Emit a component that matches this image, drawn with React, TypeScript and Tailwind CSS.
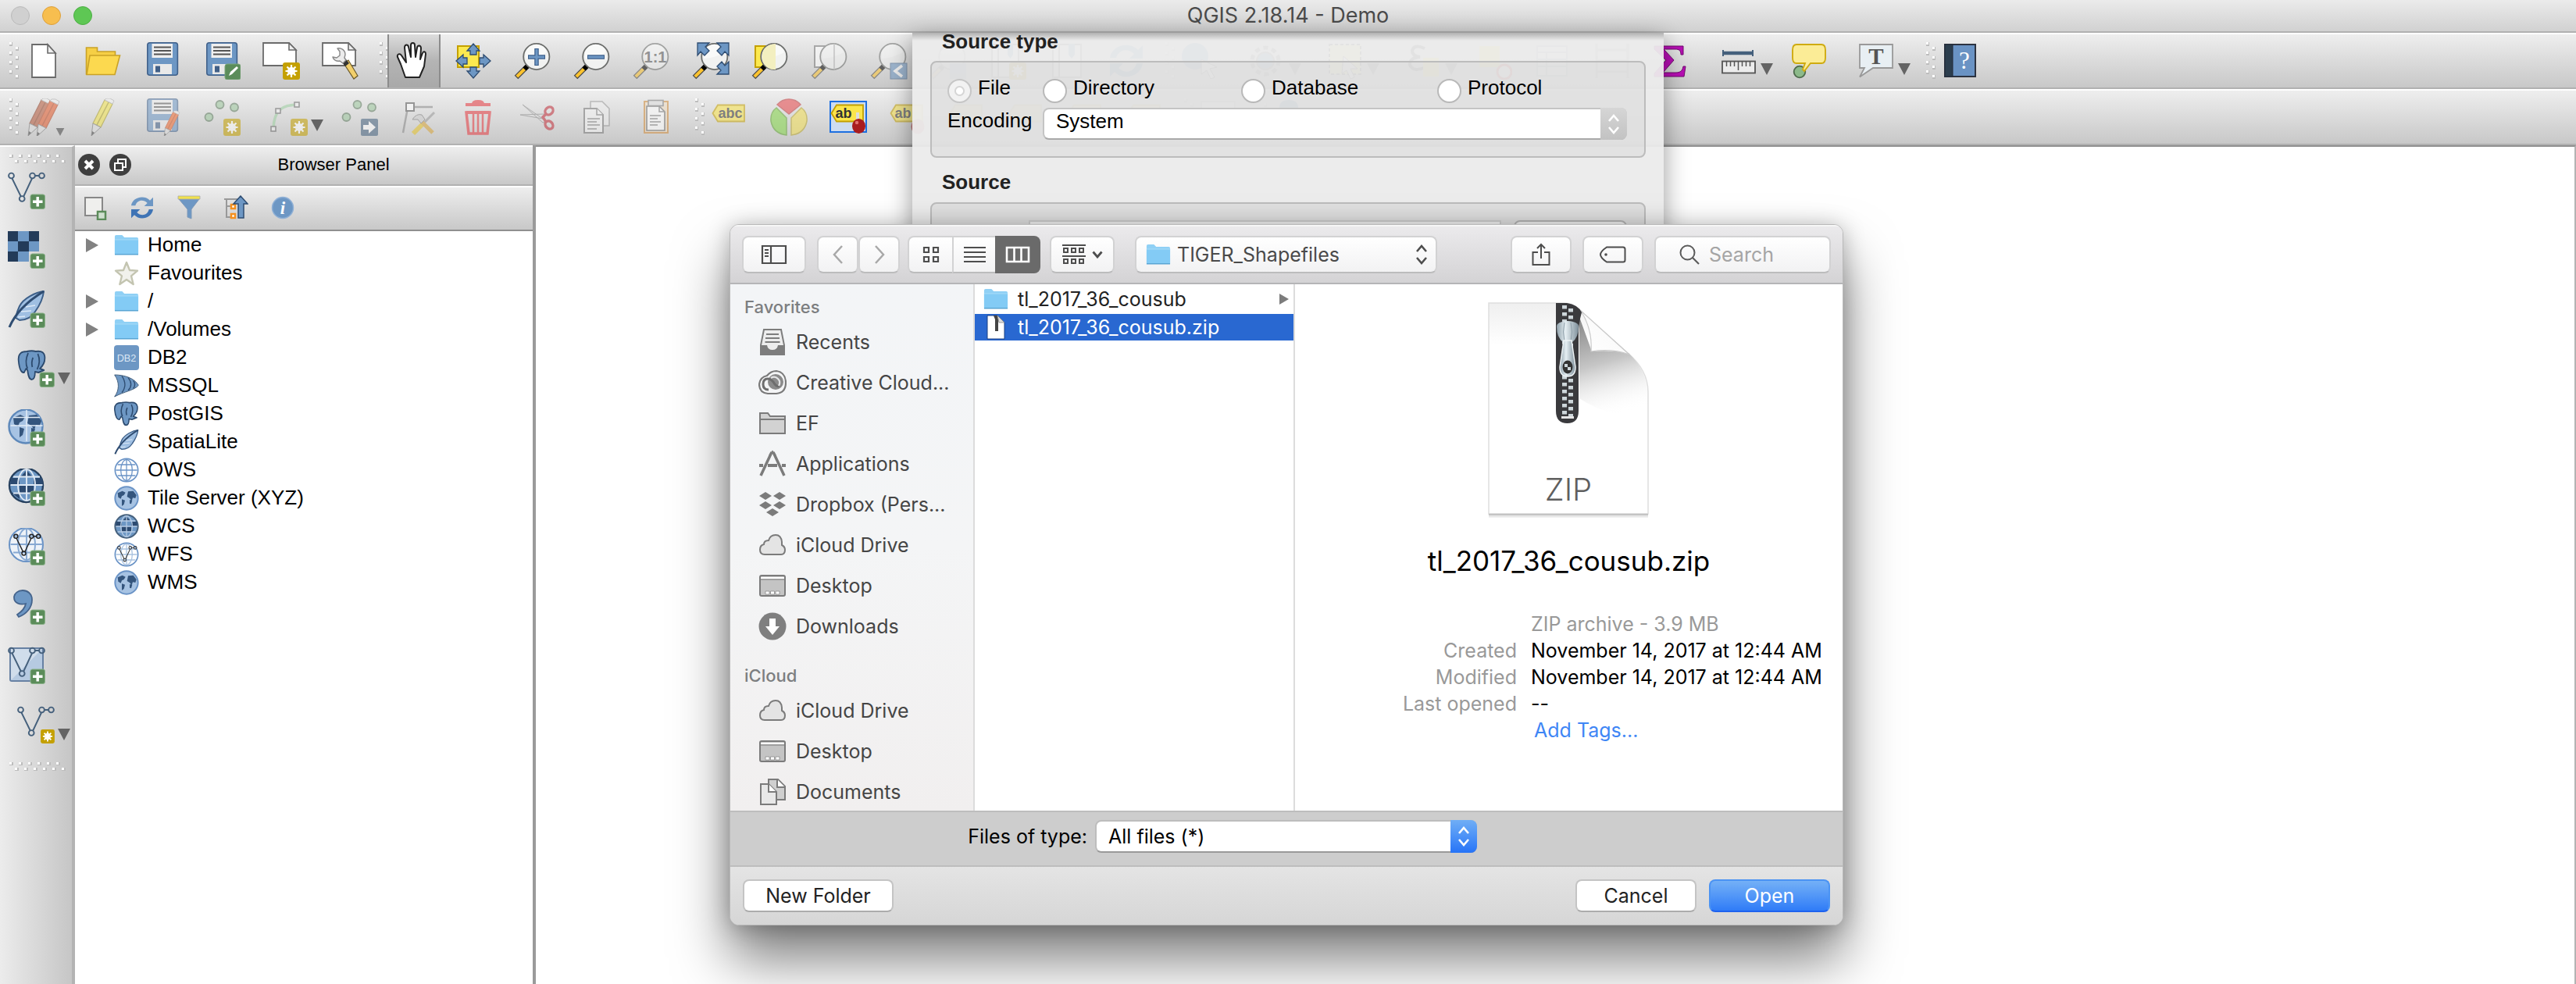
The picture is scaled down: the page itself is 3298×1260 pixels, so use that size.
import React from "react";

type Kids = { children?: React.ReactNode };

/* ---------- shared drawing parts ---------- */

function Art({ children, className = "size-12", box = "0 0 48 48" }: Kids & { className?: string; box?: string }) {
  return (
    <svg viewBox={box} className={`${className} block shrink-0`} aria-hidden="true">
      {children}
    </svg>
  );
}

const PlusBadge = () => (
  <g>
    <rect x="29" y="29" width="18.5" height="18.5" rx="2.5" fill="#5b8c5a" stroke="#8bb18a" />
    <path d="M38.2 32v12.5M32 38.2h12.5" stroke="#fff" strokeWidth="3.4" />
  </g>
);

const StarBadge = () => (
  <g>
    <rect x="26" y="26" width="22" height="22" rx="3" fill="#c4a000" />
    <path d="M37 29v16M29.5 37h15M31.5 31.5l11 11M42.5 31.5l-11 11" stroke="#fff" strokeWidth="2.2" />
    <circle cx="37" cy="37" r="4.2" fill="none" stroke="#fff" strokeWidth="1.8" />
  </g>
);

const Lens = ({ children }: Kids) => (
  <g>
    <path d="M3 45L18 30" stroke="#4a4a4a" strokeWidth="6.5" />
    <path d="M3.8 44.2L14 34" stroke="#fcc32f" strokeWidth="4" />
    <path d="M13.5 34.5L18.5 29.5" stroke="#000" strokeWidth="6" />
    <circle cx="28.8" cy="18.5" r="16.6" fill="#f1f2f1" stroke="#6b6d6b" strokeWidth="1.8" />
    <path d="M15 13a14 14 0 0 1 27 0q-12 7-27 8z" fill="#fff" opacity=".6" />
    {children}
  </g>
);

const Page = ({ x = 0, y = 0 }: { x?: number; y?: number }) => (
  <g transform={`translate(${x} ${y})`}>
    <path d="M1 1H34l9 9V30H1z" fill="#fff" stroke="#6b6b6b" strokeWidth="1.8" />
    <path d="M34 1v9h9z" fill="#eee" stroke="#6b6b6b" strokeWidth="1.6" />
  </g>
);

const Floppy = () => (
  <g>
    <rect x="4.8" y=".8" width="38.6" height="41.4" rx="3" fill="#6d97c4" stroke="#41618a" strokeWidth="1.6" />
    <rect x="10.500" y="2" width="26.5" height="18" fill="#efefef" />
    <path d="M13 6.500h22M13 11h22M13 15.500h22" stroke="#555" strokeWidth="1.8" />
    <path d="M12 28h24v13H12z" fill="#e9e9e9" />
    <path d="M15 30.500h6v8h-6z" fill="#415f87" />
  </g>
);

const Glyph = ({ x, y, size, fill, children, serif, bold }: Kids & { x: number; y: number; size: number; fill: string; serif?: boolean; bold?: boolean }) => (
  <text
    x={x}
    y={y}
    fontSize={size}
    fill={fill}
    textAnchor="middle"
    fontWeight={bold ? 700 : 400}
    fontFamily={serif ? '"Liberation Serif", serif' : '"Liberation Sans", sans-serif'}
  >
    {children}
  </text>
);

const Tag = ({ text }: { text?: string }) => (
  <g>
    <path d="M2.500 19L9 8.500H43V29.500H9z" fill="#fbe54b" stroke="#c4a000" strokeWidth="1.8" />
    {text && (
      <Glyph x={text === "abc" ? 25 : 18} y={25} size={18} fill="#333" bold>
        {text}
      </Glyph>
    )}
  </g>
);

const Vee = ({ color = "#45607c" }: { color?: string }) => (
  <g fill="none" stroke={color} strokeWidth="1.900">
    <path d="M5.500 8.500L17 32M20 32L31 8.500M35 5h5" />
    <circle cx="4.500" cy="5" r="3.400" />
    <circle cx="31.500" cy="5" r="3.400" />
    <circle cx="43.500" cy="5" r="3.400" />
    <circle cx="18.200" cy="34.500" r="3.400" />
  </g>
);

const GlobeGrid = ({ line = "#6a93c6" }: { line?: string }) => (
  <g fill="none" stroke={line} strokeWidth="1.900">
    <ellipse cx="24" cy="21" rx="11" ry="20" />
    <path d="M3.500 21h41M7 10.500h34M7 31.500h34M24 1v40" />
  </g>
);

const Land = () => (
  <g fill="#34557d">
    <path d="M7 11l9-4 6 3-3 5-4 2-2 5-5-3zM27 8l10-1 6 8-2 6-5-1-2 6-4-5-5-3zM15 23l6 2-2 8-4 3zM30 24l5 1-2 7-3-1z" />
  </g>
);

const Elephant = () => (
  <g stroke="#2c4a6e" strokeWidth="2" strokeLinejoin="round" transform="scale(.88 1)">
    <path d="M14 2c-8 0-13 3-12 12 1 10 4 16 8 15l3-5 2 2c1 6 2 12 6 12s5-4 5-10l5 1 8-3-6-2c6-5 8-10 7-16-1-5-6-7-13-6-4-1-8-1-13 0z" fill="#6d97c4" />
    <path d="M15 24c-3-6-2-14 1-20M30 5c3 6 3 13-1 20M22 22c-1-4-1-8 1-12" fill="none" />
  </g>
);

const Feather = () => (
  <g strokeLinejoin="round">
    <path d="M46 1C36 2 20 10 15 20c-3 6-4 11-5 15l5 3c8 0 15-3 20-11 5-7 10-16 11-26z" fill="#9fbfe2" stroke="#3d5f88" strokeWidth="2" />
    <path d="M46 1C28 12 10 28 2 47" fill="none" stroke="#2f4d72" strokeWidth="3" />
    <path d="M30 26l-13 1M35 19l-12 2M22 33l-9 1" stroke="#dce9f6" strokeWidth="1.600" />
  </g>
);

const Cyc = () => (
  <g>
    <path d="M3 20C5 4 28-2 39 10l6-6v17H28l6-6C26 7 14 9 11 20z" fill="#6d97c4" />
    <path d="M45 27C43 44 20 50 9 38l-6 6V27h17l-6 6c8 8 20 6 23-6z" fill="#3f74b5" />
  </g>
);

const PencilShape = ({ body, dark }: { body: string; dark: string }) => (
  <g>
    <path d="M26 2l10 5-15 30-10-5z" fill={body} stroke={dark} strokeWidth="1.200" />
    <path d="M31 5L16 34" stroke={dark} strokeWidth="1.500" />
    <path d="M26 2l10 5 2-4-5-3h-5z" fill="#eee" stroke="#aaa" />
    <path d="M11 32l10 5-12 11z" fill="#ddd" stroke="#777" />
    <path d="M10 42l3 2-4 4z" fill="#444" />
  </g>
);

const Dots = () => (
  <g fill="#9cc79d" stroke="#5d7a5e" strokeWidth="1.800">
    <circle cx="21.500" cy="8" r="5" />
    <circle cx="40" cy="11.500" r="5" />
    <circle cx="7.500" cy="24" r="5" />
  </g>
);

const Drop = ({ small }: { small?: boolean }) => (
  <svg viewBox="0 0 16 15" className={`${small ? "h-2.5 w-3.5" : "h-[15px] w-4"} block shrink-0`} aria-hidden="true">
    <path d="M0 0h16L8 15z" fill="#646464" />
  </svg>
);

/* ---------- tool bar icons ---------- */

const icons: Record<string, React.ReactNode> = {
  newFile: (
    <>
      <path d="M9 3h20l10 11v31H9z" fill="#fff" stroke="#6b6b6b" strokeWidth="1.800" />
      <path d="M29 3v11h10z" fill="#eee" stroke="#6b6b6b" strokeWidth="1.600" />
    </>
  ),
  open: (
    <>
      <path d="M2.500 7h14v5h23v5L36 41H2.500z" fill="#f6cf45" stroke="#c9a227" strokeWidth="1.600" />
      <path d="M7 17h38.500L39 41.500H3z" fill="#fcd94f" stroke="#c9a227" strokeWidth="1.600" />
    </>
  ),
  save: <Floppy />,
  saveAs: (
    <>
      <Floppy />
      <rect x="28" y="28" width="20" height="20" rx="3" fill="#5b8c5a" stroke="#7aa579" />
      <path d="M33 43l2-5 8-7 2 2-8 8z" fill="#fff" />
    </>
  ),
  layout: (
    <>
      <Page />
      <StarBadge />
    </>
  ),
  layoutManager: (
    <>
      <Page />
      <path d="M28 27l6-4 12 20-5 4z" fill="#f2cf6b" stroke="#6b5a2a" strokeWidth="1.200" />
      <path d="M26 26l5-4 4 5-5 4z" fill="#333" />
      <path
        d="M20 8c5-1 10 2 10 8l-1 4 2 3-4 4-4-3c-4 1-8-1-9-5l5 1 4-3 0-5z"
        fill="#ececec"
        stroke="#888"
        strokeWidth="1.400"
        strokeLinejoin="round"
      />
    </>
  ),
  hand: (
    <path
      d="M13 45L7 28 3 19c-1-4 3-5 5-2l6 9-2-19c0-4 4-5 5-1l3 13V4c0-4 5-4 5 0l1 15 2-12c1-4 5-3 5 1l-1 14 3-8c1-3 4-2 4 1l-2 16-6 14z"
      fill="#fff"
      stroke="#222"
      strokeWidth="2"
      strokeLinejoin="round"
    />
  ),
  pan: (
    <>
      <rect x="4" y="5" width="27" height="27" fill="#fce94f" stroke="#c4a000" strokeWidth="2" />
      <path
        d="M24 2l8 9h-4v5h-8v-5h-4zM24 46l8-9h-4v-5h-8v5h-4zM2 24l9-8v4h5v8h-5v4zM46 24l-9-8v4h-5v8h5v4z"
        fill="#6d97c4"
        stroke="#2f4d72"
        strokeWidth="1.300"
      />
    </>
  ),
  zoomIn: (
    <Lens>
      <path d="M29 8v22M18 19h22" stroke="#3c5f8a" strokeWidth="5.500" />
      <path d="M29 9v20M19 19h20" stroke="#6d97c4" strokeWidth="3" />
    </Lens>
  ),
  zoomOut: (
    <Lens>
      <path d="M18 19h22" stroke="#3c5f8a" strokeWidth="5.500" />
      <path d="M19 19h20" stroke="#6d97c4" strokeWidth="3" />
    </Lens>
  ),
  zoomNative: (
    <Lens>
      <Glyph x={29} y={26} size={20} fill="#555" bold>
        1:1
      </Glyph>
    </Lens>
  ),
  zoomFull: (
    <>
      <Lens />
      <path
        d="M7 1h15l-5 5 5 5-6 6-5-5-4 5zM47 1H32l5 5-5 5 6 6 4-5 5 5zM47 41H32l5-5-5-5 6-6 4 5 5-5z"
        fill="#6d97c4"
        stroke="#2f4d72"
        strokeWidth="1.300"
      />
    </>
  ),
  zoomSelection: (
    <>
      <rect x="5" y="5" width="26" height="27" fill="#fce94f" stroke="#c4a000" strokeWidth="2" />
      <Lens>
        <path d="M16 9q6-7 15-7v33q-9 1-15-7-5-9 0-19z" fill="#f3efc0" />
      </Lens>
    </>
  ),
  zoomLayer: (
    <>
      <rect x="5" y="5" width="26" height="27" fill="#fff" stroke="#777" strokeWidth="2" />
      <Lens>
        <path d="M30 2v33" stroke="#aaa" strokeWidth="1.500" />
      </Lens>
    </>
  ),
  zoomLast: (
    <>
      <Lens />
      <rect x="26" y="27" width="21" height="20" fill="#6d97c4" stroke="#41618a" />
      <path d="M41 30l-9 7 9 7" stroke="#fff" strokeWidth="3.500" fill="none" />
    </>
  ),
  zoomNext: (
    <>
      <Lens />
      <rect x="26" y="27" width="21" height="20" fill="#6d97c4" />
    </>
  ),
  bookmarkNew: (
    <>
      <path d="M4 3h34v42H4zM12 3v42" fill="#fff" stroke="#777" strokeWidth="2" />
      <path d="M24 2h7v14l-3.500 5-3.500-5z" fill="#6d97c4" />
      <StarBadge />
    </>
  ),
  bookmark: (
    <>
      <path d="M6 3h36v42H6zM14 3v42" fill="#fff" stroke="#777" strokeWidth="2" />
      <path d="M26 2h8v14l-4 5-4-5z" fill="#6d97c4" />
    </>
  ),
  refresh: <Cyc />,
  identify: (
    <>
      <circle cx="18" cy="18" r="17" fill="#6d97c4" />
      <path d="M26 22l20 10-9 2 6 11-5 2-5-11-7 5z" fill="#fff" stroke="#555" />
    </>
  ),
  gear: (
    <>
      <circle cx="22" cy="24" r="17" fill="none" stroke="#777" strokeWidth="5" strokeDasharray="6 5" />
      <circle cx="22" cy="24" r="11" fill="#6d97c4" stroke="#777" strokeWidth="2" />
    </>
  ),
  selectRect: (
    <>
      <rect x="4" y="3" width="40" height="38" fill="#fbf3a0" stroke="#555" strokeWidth="2" strokeDasharray="4 3" />
      <path d="M22 18l18 16h-9l5 11-5 2-5-11-6 4z" fill="#fff" stroke="#555" />
    </>
  ),
  expression: (
    <>
      <path d="M26 8q-14-6-16 3 0 7 10 8-14 1-13 10 4 10 20 3" fill="none" stroke="#444" strokeWidth="4" />
      <rect x="24" y="20" width="20" height="24" fill="#fce94f" />
    </>
  ),
  deselect: (
    <>
      <rect x="6" y="5" width="26" height="27" fill="#fce94f" />
      <circle cx="38" cy="38" r="9" fill="#fff" stroke="#d33" strokeWidth="3" />
    </>
  ),
  table: <path d="M4 5h38v38H4zM4 13h38M4 22h38M4 31h38M16 13v30" fill="#fff" stroke="#789" strokeWidth="2" />,
  abacus: <path d="M4 2v44M44 2v44M4 10h40M4 24h40M4 38h40" fill="none" stroke="#777" strokeWidth="3" />,
  sigma: (
    <path
      d="M2 5h37v11h-3c0-5-2-7-7-7H14l13 14-14 16h16c6 0 9-2 10-8h3l-2 13H2v-4l15-17L2 9z"
      fill="#b80fb5"
      stroke="#6e0a6c"
    />
  ),
  measure: (
    <>
      <path d="M4 14h38M4 10v8M42 10v8" stroke="#45607c" strokeWidth="2" />
      <path d="M4 14h38" stroke="#45607c" strokeWidth="4.500" />
      <rect x="3" y="24.500" width="42" height="15" fill="#ececec" stroke="#555" strokeWidth="1.800" />
      <path d="M8.500 25v6M13.500 25v6M18.500 25v6M23.500 25v11M28.500 25v6M33.500 25v6M38.500 25v6" stroke="#555" strokeWidth="1.500" />
    </>
  ),
  tips: (
    <>
      <circle cx="12" cy="38" r="7.300" fill="#8cba8a" stroke="#4e6b4d" strokeWidth="1.800" />
      <path d="M8 3h32q5 0 5 7v10q0 7-5 7H26l-8 10-2-2 3-8H8q-5 0-5-7V10q0-7 5-7z" fill="#fbec96" stroke="#cfab10" strokeWidth="1.900" />
    </>
  ),
  textAnno: (
    <>
      <path d="M3 3h42v30H20L3 44.500l6-11.500H3z" fill="#e8eff3" stroke="#999" strokeWidth="1.800" />
      <Glyph x={24} y={28} size={29} fill="#555" serif bold>
        T
      </Glyph>
    </>
  ),
  help: (
    <>
      <rect x="4" y="3" width="39" height="41" fill="#6a93c4" stroke="#2c3341" strokeWidth="2" />
      <path d="M4 3h10v41H4z" fill="#2c3e4e" stroke="#222b38" />
      <Glyph x={29} y={34} size={31} fill="#fff" serif>
        ?
      </Glyph>
    </>
  ),
  edits: (
    <>
      <g transform="translate(-5 0)">
        <PencilShape body="#b5583a" dark="#8d3d22" />
      </g>
      <g transform="translate(6 1)">
        <PencilShape body="#e2592a" dark="#b5401b" />
      </g>
    </>
  ),
  pencil: <PencilShape body="#f2e34d" dark="#a89c20" />,
  saveEdits: (
    <>
      <Floppy />
      <g transform="translate(20 16) scale(.68)">
        <PencilShape body="#f06a2f" dark="#c4481a" />
      </g>
    </>
  ),
  addFeature: (
    <>
      <Dots />
      <StarBadge />
    </>
  ),
  moveFeature: (
    <>
      <Dots />
      <rect x="26" y="26" width="22" height="22" rx="2" fill="#45627f" />
      <path d="M29 34h7v-5l9 8-9 8v-5h-7z" fill="#fff" />
    </>
  ),
  curve: (
    <>
      <path d="M4 38C5 16 14 8 36 8" fill="none" stroke="#9ccfa0" strokeWidth="3.500" />
      <g fill="#eee" stroke="#666" strokeWidth="1.600">
        <rect x="1" y="36" width="6" height="6" />
        <rect x="7" y="13" width="6" height="6" />
        <rect x="31" y="5" width="6" height="6" />
      </g>
      <StarBadge />
    </>
  ),
  node: (
    <>
      <path d="M10 12L4 44M18 11h24" stroke="#888" strokeWidth="2.500" fill="none" />
      <rect x="8" y="6" width="10" height="10" fill="#fff" stroke="#555" strokeWidth="2" />
      <path d="M30 32l14-14" stroke="#999" strokeWidth="3" />
      <path d="M17 45l13-13" stroke="#e5c228" strokeWidth="6" />
      <path d="M28 30l14 14" stroke="#d7a438" strokeWidth="5" />
      <path d="M16 27q5-8 12-6l4 6-5 5-4-5z" fill="#ccc" stroke="#777" />
    </>
  ),
  trash: (
    <g fill="none" stroke="#e5393f">
      <path d="M8 8h32M18 7q0-3 6-3t6 3" strokeWidth="4" />
      <path d="M9 18h30l-3 27H12z" strokeWidth="3.500" />
      <path d="M9 18h30" strokeWidth="4" />
      <path d="M18 20v24M24 20v24M30 20v24" strokeWidth="2.500" />
    </g>
  ),
  cut: (
    <>
      <path d="M5 8l30 21-4 2zM2 21l31-1-2 6z" fill="#ddd" stroke="#888" />
      <g fill="none" stroke="#c12f3a" strokeWidth="3.400">
        <ellipse cx="39" cy="16" rx="5.500" ry="4.500" transform="rotate(-40 39 16)" />
        <ellipse cx="39" cy="34" rx="5.500" ry="4.500" transform="rotate(50 39 34)" />
        <path d="M35 20l-4 4 4 6" />
      </g>
    </>
  ),
  copy: (
    <g fill="#f4f4f4" stroke="#777" strokeWidth="1.500">
      <path d="M16 4h15l9 9v22H16z" opacity=".7" />
      <path d="M8 13h16l8 8v23H8z" strokeWidth="2" />
      <path d="M24 13v8h8M12 26h16M12 30h12M12 34h16M12 39h12" />
    </g>
  ),
  paste: (
    <g>
      <rect x="9" y="4" width="30" height="40" fill="#f0dcc0" stroke="#cf8b3a" strokeWidth="2" />
      <path d="M12 10h16l7 7v24H12z" fill="#fff" stroke="#666" strokeWidth="1.600" />
      <path d="M28 10v7h7M16 22h14M16 26h10M16 30h14M16 34h10" fill="none" stroke="#777" strokeWidth="1.500" />
      <rect x="14" y="2.500" width="19" height="7" fill="#ddd" stroke="#777" strokeWidth="1.600" />
    </g>
  ),
  label: <Tag text="abc" />,
  blankLabel: <Tag />,
  pie: (
    <g strokeWidth="1.500">
      <path d="M24 20L9 8q6-7 15-7t15 7z" fill="#e8474b" stroke="#c2383c" />
      <path d="M21 47V25L8 12Q0 18 1 29q3 16 20 18z" fill="#85d749" stroke="#5fa52e" />
      <path d="M27 47V25l13-13q8 6 7 17-3 16-20 18z" fill="#f3df55" stroke="#b9a62a" />
    </g>
  ),
  pinSelected: (
    <>
      <rect x="1" y="4" width="46" height="39" fill="#cddcf0" stroke="#1d6fe0" strokeWidth="2" />
      <Tag text="ab" />
      <path d="M36 18v12" stroke="#ddd" strokeWidth="4" />
      <ellipse cx="37.500" cy="35.500" rx="8.500" ry="9.500" fill="#a91c1f" />
      <circle cx="35" cy="31" r="2.200" fill="#e06f70" />
    </>
  ),
  pin: (
    <>
      <Tag text="ab" />
      <ellipse cx="37" cy="36" rx="8.500" ry="9.500" fill="#a91c1f" />
    </>
  ),
  metasearch: <rect x="2" y="4" width="43" height="40" fill="#fff" stroke="#bbb" strokeWidth="2" />,
  python: (
    <>
      <path d="M8 22V12q0-10 12-10t12 10v12H16q-6 0-6 10-6-2-2-12z" fill="#3f74b5" />
      <path d="M40 26V36q0 10-12 10T16 36V26h16q6 0 6-10 6 2 2 10z" fill="#f6cf45" />
    </>
  ),
  vector: (
    <>
      <Vee />
      <PlusBadge />
    </>
  ),
  raster: (
    <>
      <path d="M0 0h40v26H27v13H0z" fill="#6d97c4" />
      <path d="M0 0h13v13H0zM27 0h13v13H27zM13 13h14v13H13zM0 26h13v13H0z" fill="#233b59" />
      <PlusBadge />
    </>
  ),
  feather: (
    <>
      <Feather />
      <PlusBadge />
    </>
  ),
  postgis: (
    <>
      <Elephant />
      <PlusBadge />
    </>
  ),
  wms: (
    <>
      <circle cx="23" cy="22" r="21.500" fill="#a7c3e3" stroke="#5d88ba" strokeWidth="2.400" />
      <Land />
      <path d="M3.500 21h41M24 1v40M7 10.500h34" stroke="#e3edf7" strokeWidth="1.500" />
      <PlusBadge />
    </>
  ),
  wcs: (
    <>
      <circle cx="23.500" cy="21.500" r="21.500" fill="#6d97c4" stroke="#27415f" strokeWidth="2.400" />
      <path d="M4 12h11v9H3zM33 12h11l1 9H33zM15 21h18v10H15zM17 10l7-8 7 8zM5 31h10v8z" fill="#2c4a70" />
      <GlobeGrid line="#dfe9f4" />
      <PlusBadge />
    </>
  ),
  wfs: (
    <>
      <circle cx="23.500" cy="21.500" r="21.500" fill="#edf2f8" stroke="#6a93c6" strokeWidth="2" />
      <GlobeGrid line="#86a8d2" />
      <g transform="translate(7 7) scale(.74)">
        <Vee color="#222" />
      </g>
      <PlusBadge />
    </>
  ),
  comma: (
    <>
      <path d="M19 4c6 0 12 4 12 12 0 10-7 18-17 22l-2-3c6-4 10-8 11-14-8 2-15-1-15-8 0-5 5-9 11-9z" fill="#6d97c4" stroke="#45648c" strokeWidth="1.800" />
      <PlusBadge />
    </>
  ),
  virtual: (
    <>
      <rect x="3" y="2" width="42" height="42" rx="2" fill="#b6cae1" stroke="#6781a3" strokeWidth="2" />
      <path d="M4 3h40L4 43z" fill="#dce5ef" opacity=".7" />
      <Vee />
      <PlusBadge />
    </>
  ),
  newVector: (
    <>
      <Vee />
      <g transform="translate(9 9) scale(.81)">
        <StarBadge />
      </g>
    </>
  ),
};

/* ---------- tool bars ---------- */

function Grip() {
  return (
    <svg viewBox="0 0 14 48" className="ml-3 mr-[-8px] h-12 w-3.5 shrink-0" aria-hidden="true">
      {[0, 1, 2, 3].map((i) => (
        <g key={i}>
          <path d={`M0 ${i * 12}h4v5h-4zM8 ${i * 12 + 6}h4v5h-4z`} fill="#bdbdbd" />
          <path d={`M0 ${i * 12}h3v3h-3zM8 ${i * 12 + 6}h3v3h-3z`} fill="#fff" />
        </g>
      ))}
    </svg>
  );
}

function SideGrip() {
  return (
    <svg viewBox="0 0 72 12" className="ml-3 mb-[-4px] mt-2.5 h-3 w-[72px] shrink-0" aria-hidden="true">
      {[0, 1, 2, 3, 4, 5].map((i) => (
        <g key={i}>
          <path d={`M${i * 12} 0h5v4h-5zM${i * 12 + 7} 7h5v4h-5z`} fill="#bdbdbd" />
          <path d={`M${i * 12} 0h3v3h-3zM${i * 12 + 7} 7h3v3h-3z`} fill="#fff" />
        </g>
      ))}
    </svg>
  );
}

type Tool = { id: string; name: string; menu?: boolean; faded?: boolean; pressed?: boolean; corner?: boolean } | "grip";

function ToolButton({ tool }: { tool: Exclude<Tool, "grip"> }) {
  return (
    <button
      type="button"
      aria-label={tool.name}
      aria-pressed={tool.pressed}
      className={`relative flex h-full shrink-0 items-center ${tool.menu ? "w-[100px] pl-6" : "w-[76px] justify-center"}`}
    >
      {tool.pressed && <span className="absolute inset-x-1 inset-y-0 border-x-2 border-[#8c8c8c] bg-linear-to-b from-[#dcdcdc] via-[#b4b4b4] to-[#a9a9a9]" />}
      <span className={`relative ${tool.faded ? "opacity-55" : ""}`}>
        <Art>{icons[tool.id]}</Art>
      </span>
      {tool.menu && (
        <span className="ml-1 mt-5">
          <Drop />
        </span>
      )}
      {tool.corner && (
        <span className="absolute bottom-2.5 left-[52px] opacity-70">
          <Drop small />
        </span>
      )}
    </button>
  );
}

const mainTools: Tool[] = [
  "grip",
  { id: "newFile", name: "New project" },
  { id: "open", name: "Open project" },
  { id: "save", name: "Save project" },
  { id: "saveAs", name: "Save project as" },
  { id: "layout", name: "New print composer" },
  { id: "layoutManager", name: "Composer manager" },
  "grip",
  { id: "hand", name: "Pan map", pressed: true },
  { id: "pan", name: "Pan to selection" },
  { id: "zoomIn", name: "Zoom in" },
  { id: "zoomOut", name: "Zoom out" },
  { id: "zoomNative", name: "Zoom to native resolution", faded: true },
  { id: "zoomFull", name: "Zoom full" },
  { id: "zoomSelection", name: "Zoom to selection" },
  { id: "zoomLayer", name: "Zoom to layer", faded: true },
  { id: "zoomLast", name: "Zoom last", faded: true },
  { id: "zoomNext", name: "Zoom next", faded: true },
  { id: "bookmarkNew", name: "New bookmark" },
  { id: "bookmark", name: "Show bookmarks" },
  { id: "refresh", name: "Refresh map" },
  "grip",
  { id: "identify", name: "Identify features" },
  { id: "gear", name: "Run feature action", menu: true },
  { id: "selectRect", name: "Select features", menu: true },
  { id: "expression", name: "Select by expression", menu: true },
  { id: "deselect", name: "Deselect all" },
  { id: "table", name: "Open attribute table", faded: true },
  { id: "abacus", name: "Field calculator", faded: true },
  { id: "sigma", name: "Statistical summary" },
  { id: "measure", name: "Measure line", menu: true },
  { id: "tips", name: "Map tips" },
  { id: "textAnno", name: "Text annotation", menu: true },
  "grip",
  { id: "help", name: "Help contents" },
];

const editTools: Tool[] = [
  "grip",
  { id: "edits", name: "Current edits", faded: true, corner: true },
  { id: "pencil", name: "Toggle editing", faded: true },
  { id: "saveEdits", name: "Save layer edits", faded: true },
  { id: "addFeature", name: "Add feature", faded: true },
  { id: "curve", name: "Add circular string", faded: true, menu: true },
  { id: "moveFeature", name: "Move feature", faded: true },
  { id: "node", name: "Node tool", faded: true },
  { id: "trash", name: "Delete selected", faded: true },
  { id: "cut", name: "Cut features", faded: true },
  { id: "copy", name: "Copy features", faded: true },
  { id: "paste", name: "Paste features", faded: true },
  "grip",
  { id: "label", name: "Layer labeling options", faded: true },
  { id: "pie", name: "Layer diagram options", faded: true },
  { id: "pinSelected", name: "Highlight pinned labels" },
  { id: "pin", name: "Pin labels", faded: true },
  { id: "blankLabel", name: "Show labels", faded: true },
  { id: "blankLabel", name: "Move label", faded: true },
  { id: "blankLabel", name: "Rotate label", faded: true },
  { id: "blankLabel", name: "Change label", faded: true },
  "grip",
  { id: "metasearch", name: "MetaSearch" },
  "grip",
  { id: "python", name: "Python console" },
];

function ToolBar({ tools, label }: { tools: Tool[]; label: string }) {
  return (
    <div role="toolbar" aria-label={label} className="flex h-[72px] shrink-0 items-center overflow-hidden border-y-2 border-t-white border-b-[#b1b1b1] bg-linear-to-b from-[#eeeeee] to-[#c8c8c8]">
      {tools.map((t, i) => (t === "grip" ? <Grip key={i} /> : <ToolButton key={i} tool={t} />))}
    </div>
  );
}

const layerTools: { id: string; name: string; menu?: boolean }[] = [
  { id: "vector", name: "Add vector layer" },
  { id: "raster", name: "Add raster layer" },
  { id: "feather", name: "Add SpatiaLite layer" },
  { id: "postgis", name: "Add PostGIS layer", menu: true },
  { id: "wms", name: "Add WMS layer" },
  { id: "wcs", name: "Add WCS layer" },
  { id: "wfs", name: "Add WFS layer" },
  { id: "comma", name: "Add delimited text layer" },
  { id: "virtual", name: "Add virtual layer" },
  { id: "newVector", name: "New layer", menu: true },
];

function LayerBar() {
  return (
    <div role="toolbar" aria-label="Manage layers" className="flex w-24 shrink-0 flex-col border-r-4 border-[#b3b3b3] border-t-2 border-t-white bg-linear-to-r from-[#ececec] to-[#c6c6c6]">
      <SideGrip />
      {layerTools.map((t) => (
        <button key={t.id} type="button" aria-label={t.name} className={`flex h-[76px] shrink-0 items-center ${t.menu ? "pl-[22px]" : "pl-2.5"}`}>
          <Art>{icons[t.id]}</Art>
          {t.menu && (
            <span className="ml-1 mt-6">
              <Drop />
            </span>
          )}
        </button>
      ))}
      <SideGrip />
    </div>
  );
}

/* ---------- browser panel ---------- */

const BlueFolder = ({ className = "h-7 w-8" }: { className?: string }) => (
  <svg viewBox="0 0 34 28" className={`${className} block shrink-0`} preserveAspectRatio="none" aria-hidden="true">
    <path d="M1 3q0-2 2-2h8l3 3h17q2 0 2 2v19H1z" fill="#8fd0f5" />
    <path d="M1 7h32v18q0 1-1 1H2q-1 0-1-1z" fill="#83cbf5" />
    <path d="M1 25h32v1.500H1z" fill="#5aa6d4" />
    <path d="M1 7h32" stroke="#a9dcf8" />
  </svg>
);

const treeIcons: Record<string, React.ReactNode> = {
  star: (
    <path d="M24 3l6 15 15 1-12 10 4 16-13-9-13 9 4-16L3 19l15-1z" fill="#f1f1ec" stroke="#c3c4b0" strokeWidth="3.500" strokeLinejoin="round" />
  ),
  db2: (
    <>
      <rect width="48" height="48" rx="6" fill="#6d97c4" />
      <Glyph x={24} y={31} size={19} fill="#dbe7f4">
        DB2
      </Glyph>
    </>
  ),
  mssql: (
    <>
      <path d="M1 3c18 0 38 6 46 20-8 10-28 12-46 22 9-12 10-28 0-42z" fill="#6d97c4" stroke="#45607c" strokeWidth="1.500" />
      <path d="M15 5c8 12 8 22 0 32M27 8c7 9 7 18 0 25M37 14c4 5 4 10 0 15" fill="none" stroke="#2f4d72" strokeWidth="2" />
    </>
  ),
  postgis: (
    <g transform="translate(-1 0) scale(1.3 1.2)">
      <Elephant />
    </g>
  ),
  spatialite: <Feather />,
  ows: (
    <g transform="translate(0 3)">
      <circle cx="24" cy="21" r="22" fill="#fff" stroke="#6a93c6" strokeWidth="2.500" />
      <GlobeGrid />
    </g>
  ),
  xyz: (
    <g transform="translate(0 3)">
      <circle cx="24" cy="21" r="22" fill="#a7c3e3" stroke="#6a93c6" strokeWidth="3" />
      <Land />
    </g>
  ),
  wcs: (
    <g transform="translate(0 3)">
      <circle cx="24" cy="21" r="22" fill="#6d97c4" stroke="#45607c" strokeWidth="3" />
      <path d="M4 12h11v9H3zM33 12h11l1 9H33zM15 21h18v10H15zM17 10l7-8 7 8z" fill="#2c4a70" />
      <GlobeGrid line="#b6cbe3" />
    </g>
  ),
  wfs: (
    <g transform="translate(0 3)">
      <circle cx="24" cy="21" r="22" fill="#fff" stroke="#6a93c6" strokeWidth="2.500" />
      <GlobeGrid line="#a9c2e0" />
      <g transform="translate(6 4) scale(.8)">
        <Vee color="#333" />
      </g>
    </g>
  ),
};

const tree: { label: string; icon: string; open?: boolean }[] = [
  { label: "Home", icon: "folder", open: true },
  { label: "Favourites", icon: "star" },
  { label: "/", icon: "folder", open: true },
  { label: "/Volumes", icon: "folder", open: true },
  { label: "DB2", icon: "db2" },
  { label: "MSSQL", icon: "mssql" },
  { label: "PostGIS", icon: "postgis" },
  { label: "SpatiaLite", icon: "spatialite" },
  { label: "OWS", icon: "ows" },
  { label: "Tile Server (XYZ)", icon: "xyz" },
  { label: "WCS", icon: "wcs" },
  { label: "WFS", icon: "wfs" },
  { label: "WMS", icon: "xyz" },
];

function BrowserPanel() {
  return (
    <section aria-label="Browser Panel" className="flex w-[590px] shrink-0 flex-col border-r-4 border-[#9a9a9a]">
      <header className="relative flex h-[52px] shrink-0 items-center gap-3 border-y-2 border-t-white border-b-[#b1b1b1] bg-linear-to-b from-[#eeeeee] to-[#c8c8c8] px-1 pb-0.5">
        <button type="button" aria-label="Close panel">
          <Art box="0 0 28 28" className="size-7">
            <circle cx="14" cy="14" r="14" fill="#3f3f3f" />
            <path d="M9 9l10 10M19 9L9 19" stroke="#fff" strokeWidth="4" />
          </Art>
        </button>
        <button type="button" aria-label="Float panel">
          <Art box="0 0 28 28" className="size-7">
            <circle cx="14" cy="14" r="14" fill="#3f3f3f" />
            <path d="M11 11V7h10v10h-3M7 12h10v9H7z" fill="none" stroke="#fff" strokeWidth="2" />
          </Art>
        </button>
        <h2 className="flex-1 pr-1 text-center text-[22px] leading-7 text-black">Browser Panel</h2>
      </header>
      <div role="toolbar" aria-label="Browser" className="flex h-[58px] shrink-0 items-center gap-7 border-y-2 border-t-white border-b-[#8f8f8f] bg-linear-to-b from-[#eeeeee] to-[#c8c8c8] px-2.5 pb-0.5">
        <button type="button" aria-label="Add layer">
          <Art box="0 0 32 32" className="size-8">
            <path d="M3 3h22v23H3z" fill="#efefed" stroke="#888" strokeWidth="2" />
            <rect x="19" y="21" width="10" height="10" fill="#cfe0cf" stroke="#5b8c5a" strokeWidth="2.500" />
          </Art>
        </button>
        <button type="button" aria-label="Refresh">
          <Art className="size-8">
            <Cyc />
          </Art>
        </button>
        <button type="button" aria-label="Filter browser">
          <Art box="0 0 32 32" className="size-8">
            <path d="M3 5h26L19 18v12l-5-2V18z" fill="#6d97c4" stroke="#7f99b8" />
            <path d="M2 1h28v4H2z" fill="#f0e14c" stroke="#aaa" strokeWidth=".8" />
          </Art>
        </button>
        <button type="button" aria-label="Collapse all">
          <Art box="0 0 32 32" className="size-8">
            <path d="M1 5h22M4 5v23h6M4 14h6" stroke="#999" strokeWidth="2" fill="none" />
            <path d="M10 12h5v5h-5zM10 24h5v5h-5z" fill="#fff" stroke="#f5901e" strokeWidth="2.500" />
            <path d="M22 1l9 10h-5v18h-7V11h-6z" fill="#6d97c4" stroke="#2f4d72" strokeWidth="1.500" />
          </Art>
        </button>
        <button type="button" aria-label="Properties">
          <Art box="0 0 32 32" className="size-8">
            <circle cx="16" cy="16" r="13.500" fill="#6d97c4" stroke="#8fb0d6" strokeWidth="1.500" />
            <text x="16" y="24" fontSize="23" fontStyle="italic" fontWeight="700" fill="#fff" textAnchor="middle" fontFamily='"Liberation Serif", serif'>
              i
            </text>
          </Art>
        </button>
      </div>
      <ul className="flex-1 bg-white">
        {tree.map((n) => (
          <li key={n.label} className="flex h-9 items-center pl-3.5 text-[26px] leading-8 text-black">
            <span className="w-9">
              {n.open && (
                <svg viewBox="0 0 16 18" className="h-[18px] w-4" aria-hidden="true">
                  <path d="M0 0l16 9-16 9z" fill="#828282" />
                </svg>
              )}
            </span>
            {n.icon === "folder" ? <BlueFolder /> : <Art className="size-8">{treeIcons[n.icon]}</Art>}
            <span className="ml-[11px] pb-0.5">{n.label}</span>
          </li>
        ))}
      </ul>
    </section>
  );
}

/* ---------- vector layer sheet ---------- */

function UpDown({ className = "" }: { className?: string }) {
  return (
    <svg viewBox="0 0 16 26" className={`${className} h-[26px] w-4`} fill="none" stroke="currentColor" strokeWidth="2.600" aria-hidden="true">
      <path d="M2 9l6-7 6 7M2 17l6 7 6-7" />
    </svg>
  );
}

function Sheet() {
  return (
    <div className="absolute inset-x-0 top-[42px] z-10 flex justify-center">
      <section className="relative h-[360px] w-[962px] bg-[#ebebeb]/95 shadow-[0_8px_30px_rgba(0,0,0,0.4)]">
        <div className="absolute inset-x-0 top-0 h-2.5 bg-linear-to-b from-black/25 to-transparent" />
        <h3 className="pl-[38px] text-[26px] font-bold leading-[22px] text-[#222]">Source type</h3>
        <div className="mx-[23px] mt-3.5 h-[124px] rounded-lg border-2 border-[#bcbcbc] bg-black/4 px-5 pt-[21px]">
          <div className="grid grid-cols-[122px_254px_251px_auto] text-[26px] leading-[22px] text-black">
            {["File", "Directory", "Database", "Protocol"].map((r, i) => (
              <label key={r} className="flex h-[31px] items-start gap-2">
                <input
                  type="radio"
                  name="source"
                  defaultChecked={i === 0}
                  className="size-[31px] shrink-0 appearance-none rounded-full border-2 border-[#b9b9b9] bg-white checked:border-[#c6c6c6] checked:bg-[radial-gradient(circle,#fff_0_4px,#d6d6d6_5px_6px,#f2f2f2_7px)]"
                />
                {r}
              </label>
            ))}
          </div>
          <div className="mt-1.5 flex items-start text-[26px] text-black">
            <label htmlFor="encoding" className="w-[122px] leading-8">
              Encoding
            </label>
            <span className="relative flex w-[748px]">
              <select id="encoding" className="h-[41px] w-full appearance-none rounded-lg border-2 border-[#c4c4c4] border-b-[#a9a9a9] bg-white pb-2 pl-[15px] leading-7">
                <option>System</option>
              </select>
              <span className="pointer-events-none absolute inset-y-0 right-0 flex w-[34px] items-center justify-center rounded-r-lg bg-linear-to-b from-[#d6d6d6] to-[#c2c2c2]">
                <UpDown className="text-white" />
              </span>
            </span>
          </div>
        </div>
        <h3 className="mt-[17px] pl-[38px] text-[26px] font-bold leading-7 text-[#222]">Source</h3>
        <div className="mx-[23px] mt-3 flex h-24 justify-end gap-4 rounded-lg border-2 border-[#bcbcbc] bg-black/5 pr-[22px] pt-[21px]">
          <input aria-label="Dataset" className="h-11 w-[605px] border-2 border-[#cfcfcf] bg-[#f4f4f4]" />
          <button type="button" aria-label="Browse" className="h-11 w-[145px] rounded-lg border-2 border-[#b5b5b5] bg-[#f2f2f2]" />
        </div>
      </section>
    </div>
  );
}

/* ---------- open file dialog ---------- */

const places: Record<string, React.ReactNode> = {
  recents: (
    <>
      <path d="M7 2h22l4 20v12H3V22z" fill="#ededed" stroke="#7d7d7d" strokeWidth="2" />
      <path d="M10 8h16M9 13h18M8.500 18h19" stroke="#7d7d7d" strokeWidth="2.200" />
      <path d="M3 22h8q1 6 7 6t7-6h8v12H3z" fill="#7d7d7d" />
    </>
  ),
  cc: (
    <g fill="none" stroke="#7a7a7a" strokeWidth="2.200">
      <path d="M11 9Q16 3 23 3q12 2 12 15T23 32H12Q1 31 1 20 2 11 11 9z" fill="#f4f5f6" />
      <circle cx="22" cy="17" r="10" fill="#8a8a8a" stroke="none" />
      <path d="M13 27q-7 0-7-7t6-7q5 0 9 7 3 4 6 2" strokeWidth="3" stroke="#6d6d6d" />
      <path d="M16 12q5-3 9 1t1 9" stroke="#e4e5e6" />
    </g>
  ),
  folder: <path d="M2 31V5h10l3 4h19v22zM2 13h32" fill="#d2d2d2" stroke="#7b7b7b" strokeWidth="2" />,
  apps: (
    <g stroke="#7b7b7b" fill="none">
      <path d="M17 3L3 33M19 3l14 30" strokeWidth="3.500" />
      <path d="M1 20h5M12 20h12M30 20h5" strokeWidth="4" />
      <path d="M14 7l4-5 4 5" strokeWidth="2" />
    </g>
  ),
  dropbox: <path d="M9 2l8 5-8 5-8-5zM27 2l8 5-8 5-8-5zM9 14l8 5-8 5-8-5zM27 14l8 5-8 5-8-5zM18 23l8 5-8 5-8-5z" fill="#7b7b7b" />,
  cloud: <path d="M8 30q-6 0-6-6t5-7q0-5 6-5 2-7 9-7t8 9q0 3 0 4 4 2 4 6 0 6-5 6z" fill="#e4e4e4" stroke="#7b7b7b" strokeWidth="2" />,
  desktop: (
    <>
      <rect x="2" y="5" width="32" height="26" rx="2" fill="#c4c4c4" stroke="#7b7b7b" strokeWidth="2" />
      <path d="M3 7h30v2H3z" fill="#fff" />
      <path d="M3 10h30" stroke="#7b7b7b" />
      <path d="M9 25h5v4H9zM15.500 25h5v4h-5zM22 25h5v4h-5z" fill="#fff" stroke="#8a8a8a" strokeWidth=".8" />
    </>
  ),
  downloads: (
    <>
      <circle cx="18" cy="18" r="17.500" fill="#7f7f7f" />
      <path d="M14 8h8v10h5l-9 11-9-11h5z" fill="#fff" />
    </>
  ),
  documents: (
    <g stroke="#7b7b7b" strokeWidth="2">
      <path d="M13 2h12l9 9v17H13z" fill="#cfcfcf" />
      <path d="M24 2v10h10" fill="#fff" />
      <path d="M3 8h10l10 10v16H3z" fill="#e8e8e8" />
      <path d="M13 8v10h10" fill="#fff" />
    </g>
  ),
};

const favorites = [
  ["Recents", "recents"],
  ["Creative Cloud...", "cc"],
  ["EF", "folder"],
  ["Applications", "apps"],
  ["Dropbox (Pers...", "dropbox"],
  ["iCloud Drive", "cloud"],
  ["Desktop", "desktop"],
  ["Downloads", "downloads"],
];
const cloudPlaces = [
  ["iCloud Drive", "cloud"],
  ["Desktop", "desktop"],
  ["Documents", "documents"],
];

function PlaceGroup({ title, items, className }: { title: string; items: string[][]; className: string }) {
  return (
    <section className={className}>
      <h4 className="h-[38px] pl-[18px] text-[22px] font-medium leading-[38px] text-[#7c7e80]">{title}</h4>
      <ul>
        {items.map(([name, icon]) => (
          <li key={name}>
            <button type="button" className="flex h-[52px] w-full items-center gap-3 whitespace-nowrap pl-9 text-[25px] leading-8 text-[#454545]">
              <Art box="0 0 36 36" className="size-9">
                {places[icon]}
              </Art>
              {name}
            </button>
          </li>
        ))}
      </ul>
    </section>
  );
}

const tb = "flex h-12 items-center justify-center border-2 border-[#d2d2d3] border-b-[#bcbcbd] bg-linear-to-b from-white to-[#f2f2f3]";

function DialogToolbar() {
  return (
    <div className="flex h-19 shrink-0 items-center border-b-2 border-[#b5b5b7] border-t-2 border-t-[#f6f6f6] bg-linear-to-b from-[#ebeaec] to-[#d4d3d5] px-[15px]">
      <button type="button" aria-label="Toggle sidebar" className={`${tb} w-[82px] rounded-lg text-[#4d4d4d]`}>
        <Art box="0 0 34 26" className="h-[26px] w-[34px]">
          <path d="M2 2h30v22H2zM13 2v22M5 7h5M5 11h5M5 15h5" fill="none" stroke="currentColor" strokeWidth="2.200" />
        </Art>
      </button>
      <div className="ml-3.5 flex text-[#a8a8a8]">
        <button type="button" aria-label="Back" className={`${tb} w-[53px] rounded-lg`}>
          <Art box="0 0 14 26" className="h-[26px] w-3.5">
            <path d="M12 2L2 13l10 11" fill="none" stroke="currentColor" strokeWidth="2.500" />
          </Art>
        </button>
        <button type="button" aria-label="Forward" className={`${tb} w-[53px] rounded-lg`}>
          <Art box="0 0 14 26" className="h-[26px] w-3.5">
            <path d="M2 2l10 11L2 24" fill="none" stroke="currentColor" strokeWidth="2.500" />
          </Art>
        </button>
      </div>
      <div className="ml-2.5 flex text-[#4d4d4d]">
        <button type="button" aria-label="Icon view" className={`${tb} w-[57px] rounded-l-lg border-r-0`}>
          <Art box="0 0 22 22" className="size-[22px]">
            <path d="M2 2h6v6H2zM14 2h6v6h-6zM2 14h6v6H2zM14 14h6v6h-6z" fill="none" stroke="currentColor" strokeWidth="2.200" />
          </Art>
        </button>
        <button type="button" aria-label="List view" className={`${tb} w-[55px] border-r-0`}>
          <Art box="0 0 28 22" className="h-[22px] w-7">
            <path d="M0 2h28M0 8h28M0 14h28M0 20h28" stroke="currentColor" strokeWidth="2.200" />
          </Art>
        </button>
        <button type="button" aria-label="Column view" aria-pressed="true" className="flex h-12 w-[58px] items-center justify-center rounded-r-lg bg-[#6a6a6a] text-white">
          <Art box="0 0 32 22" className="h-[22px] w-8">
            <path d="M2 2h28v18H2zM11.500 2v18M20.500 2v18" fill="none" stroke="currentColor" strokeWidth="2.600" />
          </Art>
        </button>
      </div>
      <button type="button" aria-label="Group items" className={`${tb} ml-3 w-[83px] gap-2 rounded-lg text-[#4d4d4d]`}>
        <Art box="0 0 30 28" className="h-7 w-[30px]">
          <path d="M0 2h30M0 16h30" stroke="currentColor" strokeWidth="2.200" />
          <path d="M2 6h5v5H2zM12 6h5v5h-5zM22 6h5v5h-5zM2 20h5v5H2zM12 20h5v5h-5zM22 20h5v5h-5z" fill="none" stroke="currentColor" strokeWidth="2" />
        </Art>
        <Art box="0 0 14 10" className="h-2.5 w-3.5">
          <path d="M1.500 1.500L7 8l5.500-6.500" fill="none" stroke="currentColor" strokeWidth="2.800" />
        </Art>
      </button>
      <button type="button" className={`${tb} ml-[26px] w-[387px] justify-start! gap-2 rounded-lg pl-3 pr-2.5 text-[25px] leading-8 text-[#4a4a4a]`}>
        <BlueFolder />
        <span className="flex-1 text-left">TIGER_Shapefiles</span>
        <UpDown className="text-[#4d4d4d]" />
      </button>
      <button type="button" aria-label="Share" className={`${tb} ml-auto w-[78px] rounded-lg text-[#4d4d4d]`}>
        <Art box="0 0 24 30" className="h-[30px] w-6">
          <path d="M8 12H1.500v16h21V12H16M12 20V2M7 7l5-5 5 5" fill="none" stroke="currentColor" strokeWidth="2" />
        </Art>
      </button>
      <button type="button" aria-label="Tags" className={`${tb} ml-3.5 w-[78px] rounded-lg text-[#4d4d4d]`}>
        <Art box="0 0 34 22" className="h-[22px] w-[34px]">
          <path d="M9 1.500h21q2.500 0 2.500 2.500v14q0 2.500-2.500 2.500H9Q1 15 1 11t8-9.500z" fill="none" stroke="currentColor" strokeWidth="2" />
          <circle cx="8" cy="11" r="1.800" fill="currentColor" />
        </Art>
      </button>
      <label className={`${tb} ml-3.5 w-[226px] justify-start! gap-3 rounded-lg pl-[30px] text-[#5a5a5a]`}>
        <Art box="0 0 26 26" className="size-[26px]">
          <circle cx="10.500" cy="10.500" r="9" fill="none" stroke="currentColor" strokeWidth="2" />
          <path d="M17 17l8 8" stroke="currentColor" strokeWidth="2.200" />
        </Art>
        <input type="search" aria-label="Search" placeholder="Search" className="w-[140px] bg-transparent text-[25px] leading-8 outline-none placeholder:text-[#a5a5a5]" />
      </label>
    </div>
  );
}

function ZipDocument() {
  const rows = Array.from({ length: 16 }, (_, i) => i);
  return (
    <svg viewBox="0 0 210 278" className="h-[278px] w-[210px]" role="img" aria-label="ZIP archive">
      <defs>
        <linearGradient id="sheen" x1="0" y1="0" x2="0" y2="1">
          <stop offset="0" stopColor="#efefef" />
          <stop offset=".2" stopColor="#fff" />
          <stop offset="1" stopColor="#fff" />
        </linearGradient>
        <linearGradient id="under" x1=".35" y1="0" x2=".55" y2="1">
          <stop offset="0" stopColor="#8d8d8d" />
          <stop offset=".45" stopColor="#c6c6c6" />
          <stop offset="1" stopColor="#fff" stopOpacity="0" />
        </linearGradient>
        <linearGradient id="flap" x1="0" y1="1" x2="1" y2="0">
          <stop offset="0" stopColor="#fff" />
          <stop offset=".6" stopColor="#fafafa" />
          <stop offset="1" stopColor="#d8d8d8" />
        </linearGradient>
        <linearGradient id="metal" x1="0" y1="0" x2="1" y2="0">
          <stop offset="0" stopColor="#8fa0aa" />
          <stop offset=".4" stopColor="#e6eff3" />
          <stop offset="1" stopColor="#7e8f9a" />
        </linearGradient>
      </defs>
      <path d="M2 2H98Q112 2 122 14L180 66Q206 88 206 116V272H2z" fill="url(#sheen)" stroke="#dedede" strokeWidth="1.500" />
      <path d="M2 273h204" stroke="#c4c4c4" strokeWidth="2.500" />
      <path d="M2 275.500h204" stroke="#e6e6e6" strokeWidth="2" />
      <path d="M118 20V124q46 30 87 18V116q0-26-24-50-24-4-47-2z" fill="url(#under)" />
      <path d="M120 12L182 68Q160 60 133 64 135 36 120 12z" fill="url(#flap)" stroke="#c9c9c9" strokeWidth="1.200" />
      <path d="M88 2h14q14 2 19 12-4 14-4 28v98q0 16-14.500 16T88 140z" fill="#3a3a3d" />
      {rows.map((i) => (
        <g key={i} fill="#cdd6da">
          <rect x="96" y={5 + i * 9} width="6" height="4.500" />
          <rect x="104" y={9 + i * 9} width="6" height="4.500" />
        </g>
      ))}
      <path d="M95 147h16v3H95z" fill="#e6e6e6" />
      <path d="M89 32q0-6 14-7 14 1 14 7 0 14-8 20h-12q-8-6-8-20z" fill="url(#metal)" />
      <path d="M99 27q-3 12 0 24M107 27q3 12 0 24" fill="none" stroke="#8fa0aa" />
      <path d="M98 50h10l5 34q0 12-10 12t-10-12z" fill="url(#metal)" stroke="#eef3f5" strokeWidth="1.500" />
      <ellipse cx="103" cy="84" rx="6.500" ry="8.500" fill="#333" />
      <path d="M99 80h4v4h-4zM103 84h4v4h-4z" fill="#cdd6da" />
      <text x="104" y="255" fontSize="40" textAnchor="middle" fill="#5f5f5f" fontFamily="Inter, sans-serif" fontWeight="300">
        ZIP
      </text>
    </svg>
  );
}

function OpenDialog() {
  return (
    <div className="absolute inset-x-0 top-[287px] z-20 flex justify-center pr-1">
      <div
        role="dialog"
        aria-label="Open"
        className="flex w-[1426px] flex-col overflow-hidden rounded-xl border border-[#b9b9b9] bg-[#ececec] font-['Inter','Liberation_Sans',sans-serif] shadow-[0_44px_70px_rgba(0,0,0,0.5),0_2px_28px_rgba(0,0,0,0.25)]"
      >
        <DialogToolbar />
        <div className="flex h-[674px] overflow-hidden">
          <nav aria-label="Places" className="w-[313px] shrink-0 border-r-2 border-[#dcdcdc] bg-linear-to-b from-[#f3f5f7] via-[#f4f5f6] to-[#f1efef]">
            <PlaceGroup title="Favorites" items={favorites} className="mt-2.5" />
            <PlaceGroup title="iCloud" items={cloudPlaces} className="mt-[18px]" />
          </nav>
          <ul aria-label="TIGER_Shapefiles" className="w-[410px] shrink-0 border-r-2 border-[#dcdcdc] bg-white pt-0.5 text-[25px] leading-[34px]">
            <li className="mb-0.5 flex h-[34px] items-center gap-3 pl-[11px] pr-1.5 text-[#222]">
              <BlueFolder />
              <span className="flex-1">tl_2017_36_cousub</span>
              <Art box="0 0 12 14" className="h-3.5 w-3">
                <path d="M0 0l12 7-12 7z" fill="#7c7c7c" />
              </Art>
            </li>
            <li aria-selected="true" className="flex h-[34px] items-center gap-3 bg-[#2968d1] pl-[11px] text-white">
              <Art box="0 0 32 32" className="size-8">
                <path d="M5 1h13l9 9v21H5z" fill="#fff" stroke="#1b3f80" />
                <path d="M13 1h5l1 5v15h-4V6z" fill="#444" />
                <path d="M18 1l9 9h-7z" fill="#ddd" stroke="#888" strokeWidth=".8" />
              </Art>
              tl_2017_36_cousub.zip
            </li>
          </ul>
          <section aria-label="Preview" className="flex flex-1 flex-col items-center bg-white pt-[22px]">
            <ZipDocument />
            <h4 className="mt-[34px] text-[35px] leading-10 text-black">tl_2017_36_cousub.zip</h4>
            <dl className="mt-11 grid grid-cols-[auto_380px] gap-x-[18px] self-end pr-[19px] text-[25px] leading-[34px] text-black [&>dt]:text-right [&>dt]:text-[#999]">
              <dt aria-label="Kind" />
              <dd className="text-[#999]">ZIP archive - 3.9 MB</dd>
              <dt>Created</dt>
              <dd>November 14, 2017 at 12:44 AM</dd>
              <dt>Modified</dt>
              <dd>November 14, 2017 at 12:44 AM</dd>
              <dt>Last opened</dt>
              <dd>--</dd>
              <dt aria-label="Tags" />
              <dd className="pl-1">
                <a href="#tags" className="text-[#3f86f5]">
                  Add Tags...
                </a>
              </dd>
            </dl>
          </section>
        </div>
        <div className="flex h-[72px] shrink-0 items-center border-y-2 border-[#bdbdbd] bg-[#cdcdcd] pb-1.5 text-[25px] text-black">
          <label htmlFor="filetype" className="w-[467px] pr-2.5 text-right leading-8">
            Files of type:
          </label>
          <span className="relative flex w-[489px]">
            <select id="filetype" className="h-[42px] w-full appearance-none rounded-lg border-2 border-[#bdbdbd] border-b-[#9a9a9a] bg-white pl-[15px] leading-8">
              <option>All files (*)</option>
            </select>
            <span className="pointer-events-none absolute inset-y-0 right-0 flex w-[34px] items-center justify-center rounded-r-lg bg-linear-to-b from-[#70aef5] to-[#2673f7]">
              <UpDown className="text-white" />
            </span>
          </span>
        </div>
        <footer className="flex h-[74px] shrink-0 items-center bg-linear-to-b from-[#e4e4e4] to-[#d6d6d6] px-4 text-[25px] leading-8 text-[#222]">
          <button type="button" className="h-[42px] w-[193px] rounded-lg border-2 border-[#c4c4c4] border-b-[#acacac] bg-white leading-8">
            New Folder
          </button>
          <button type="button" className="ml-auto h-[42px] w-[155px] rounded-lg border-2 border-[#c4c4c4] border-b-[#acacac] bg-white leading-8">
            Cancel
          </button>
          <button type="button" className="ml-4 h-[42px] w-[155px] rounded-lg border-2 border-[#4b93f3] border-b-[#1e62ef] bg-linear-to-b from-[#74b0f6] to-[#2f7bf7] leading-8 text-white">
            Open
          </button>
        </footer>
      </div>
    </div>
  );
}

export default function App() {
  return (
    <div className="relative flex h-screen min-w-[2560px] flex-col overflow-hidden bg-white font-['Liberation_Sans',Arial,sans-serif]">
      <header className="relative flex h-[42px] shrink-0 items-center justify-center border-b-2 border-[#b1b1b1] bg-linear-to-b from-[#ebebeb] to-[#d1d1d1]">
        <div className="absolute left-3.5 flex gap-4">
          <button type="button" aria-label="Close" className="size-6 rounded-full border border-[#bababa] bg-[#d0d0d0]" />
          <button type="button" aria-label="Minimize" className="size-6 rounded-full border border-[#dda03c] bg-[#f7be4f]" />
          <button type="button" aria-label="Zoom" className="size-6 rounded-full border border-[#4cae44] bg-[#5ec754]" />
        </div>
        <h1 className="font-['Inter','Liberation_Sans',sans-serif] text-[27px] leading-8 text-[#4b4b4b]">QGIS 2.18.14 - Demo</h1>
      </header>
      <ToolBar tools={mainTools} label="Project and navigation" />
      <ToolBar tools={editTools} label="Digitizing and labels" />
      <div className="flex min-h-0 flex-1">
        <LayerBar />
        <BrowserPanel />
        <main aria-label="Map canvas" className="flex-1 border-r-2 border-t-2 border-r-[#b3b3b3] border-t-[#8f8f8f] bg-white" />
      </div>
      <Sheet />
      <OpenDialog />
    </div>
  );
}
